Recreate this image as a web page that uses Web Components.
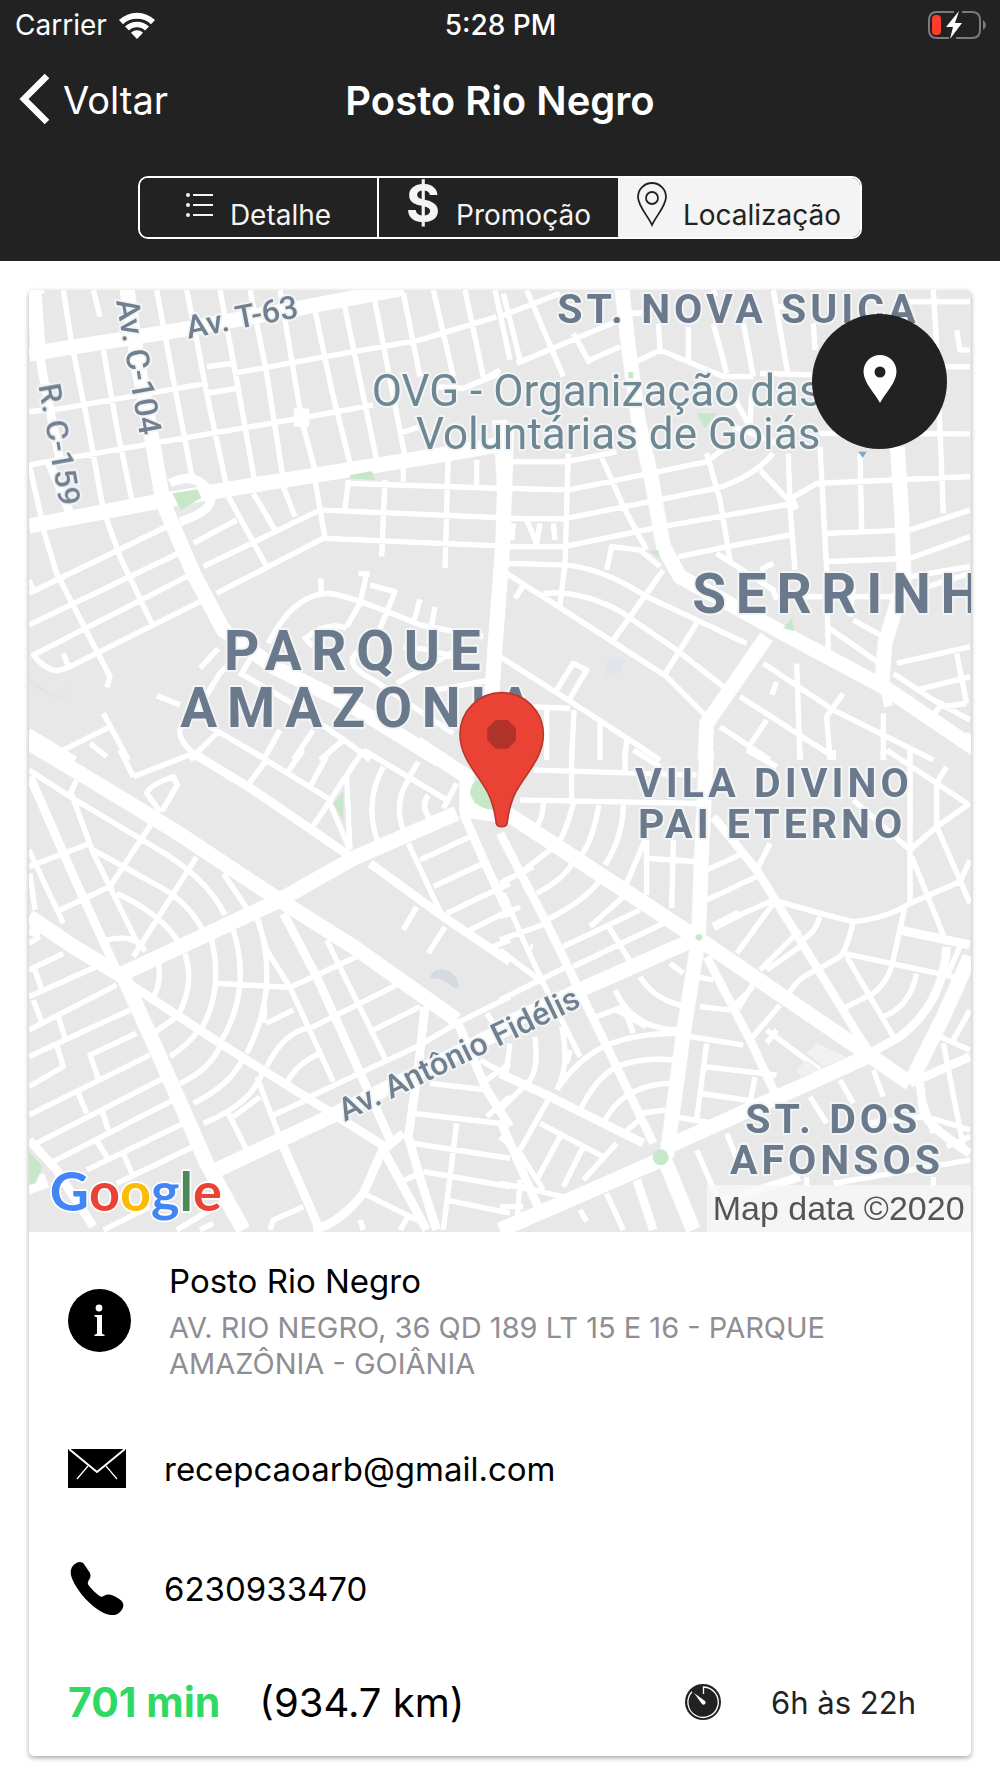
<!DOCTYPE html>
<html lang="pt-BR">
<head>
<meta charset="utf-8">
<meta name="viewport" content="width=device-width, initial-scale=1">
<title>Posto Rio Negro</title>
<style>
    body {
        margin: 0;
        background: #fff;
        font-family: Inter, "Liberation Sans", sans-serif;
        color: #000;
    }
</style>
</head>
<body>
<station-page>
    <status-bar slot="header" carrier="Carrier" time="5:28 PM"></status-bar>
    <nav-header slot="header" back="Voltar">Posto Rio Negro</nav-header>
    <tab-group slot="header">
        <tab-item icon="list">Detalhe</tab-item>
        <tab-item icon="dollar">Promoção</tab-item>
        <tab-item icon="pin" selected>Localização</tab-item>
    </tab-group>
    <station-card>
        <station-map slot="map"></station-map>
        <info-row icon="info" tall>
            Posto Rio Negro
            <span slot="detail">AV. RIO NEGRO, 36 QD 189 LT 15 E 16 - PARQUE AMAZÔNIA - GOIÂNIA</span>
        </info-row>
        <info-row icon="mail" href="mailto:recepcaoarb@gmail.com">recepcaoarb@gmail.com</info-row>
        <info-row icon="phone" href="tel:6230933470">6230933470</info-row>
        <trip-summary>
            <span slot="duration">701 min</span>
            <span slot="distance">(934.7 km)</span>
            <span slot="hours">6h às 22h</span>
        </trip-summary>
    </station-card>
</station-page>

<script>
const icons = {
    list: `<svg width="28" height="46" viewBox="0 0 28 46" fill="#f4f4f4" aria-hidden="true">
        <circle cx="2" cy="14" r="2"/><circle cx="2" cy="24" r="2"/><circle cx="2" cy="34" r="2"/>
        <path d="M7 13h20v2H7zM7 23h20v2H7zM7 33h20v2H7z"/></svg>`,
    dollar: `<span class="dollar" aria-hidden="true">$</span>`,
    pin: `<svg width="30" height="46" viewBox="0 0 30 46" fill="none" stroke="#222" stroke-width="1.8" aria-hidden="true">
        <path d="M15 44C11 35 1 25 1 16a14 14 0 0 1 28 0c0 9-10 19-14 28z"/><circle cx="15" cy="17" r="6"/></svg>`,
    info: `<svg width="63" height="63" viewBox="0 0 63 63" aria-hidden="true">
        <circle cx="31.5" cy="31.5" r="31.5"/>
        <g fill="#fff"><circle cx="31" cy="19" r="3.4"/><path d="M26.500 26H34v18c0 1 .8 1.400 2.500 1.600V47h-10v-1.400c1.700-.2 2.500-.6 2.500-1.600V29c0-1-.8-1.300-2.500-1.500z"/></g></svg>`,
    mail: `<svg width="58" height="39" viewBox="0 0 58 39" aria-hidden="true">
        <path d="M0 0h58v39H0z"/>
        <path d="M1 0l28 23L57 0" fill="none" stroke="#fff" stroke-width="2"/>
        <path d="M20 17L9 30M38 17l11 13" stroke="#fff" stroke-width="1.2"/></svg>`,
    phone: `<svg width="58" height="53" viewBox="0 0 58 53" aria-hidden="true">
        <path d="M8 1.200C11-.6 14.300-.2 16.300 2.500L21 9.500c2.400 3.500 1.600 6.200-.3 9-1.200 1.800-1.300 3.500.2 5.300 3.300 4 6.600 7.200 10.300 10 1.800 1.400 3.100 1 4.900-.1 2.600-1.600 5.400-1.800 8.800-.2 4.200 2 8.600 4.400 10 7.500 1.600 3.600-1 8-4.600 10.600-3.200 2.200-9.500 2-14.600-.6C23 44.500 10 31 4 16.500 1.700 10.500 2 4.800 8 1.200z"/></svg>`,
    clock: `<svg width="36" height="36" viewBox="0 0 36 36" aria-hidden="true">
        <circle cx="18" cy="18" r="18" fill="#222"/>
        <path d="M18.500 10V3a15.200 15.200 0 1 1-11.500 4.800" fill="none" stroke="#fff" stroke-width="1.300"/>
        <path d="M9 9l11 8a2 2 0 1 1-3 3z" fill="#fff"/></svg>`,
};

class StationPage extends HTMLElement {
    constructor() {
        super();
        this.attachShadow({mode: "open"}).innerHTML = `
            <style>
                :host { display: block; }
                header {
                    background: #222;
                    color: #fff;
                    padding-bottom: 22px;
                }
                main { padding: 29px 29px 22px; }
            </style>
            <header><slot name="header"></slot></header>
            <main><slot></slot></main>
        `;
    }
}

class StatusBar extends HTMLElement {
    constructor() {
        super();
        this.attachShadow({mode: "open"}).innerHTML = `
            <style>
                :host {
                    display: grid;
                    grid-template-columns: 1fr auto 1fr;
                    align-items: center;
                    height: 50px;
                    padding: 0 14px 0 15px;
                    font-size: 28px;
                }
                .carrier { display: flex; align-items: center; gap: 11px; }
                .time { font-weight: 500; }
                .battery { justify-self: end; }
            </style>
            <span class="carrier">${this.getAttribute("carrier")}
                <svg width="38" height="28" viewBox="0 0 38 28" fill="#fff" aria-hidden="true">
                    <path d="M1 9a26 26 0 0 1 36 0l-4 4.200a20.500 20.500 0 0 0-28 0z"/>
                    <path d="M7 15.500a17.300 17.300 0 0 1 24 0l-4 4a11.500 11.500 0 0 0-16 0z"/>
                    <path d="M19 28l-6-6.200a8.500 8.500 0 0 1 12 0z"/>
                </svg>
            </span>
            <span class="time">${this.getAttribute("time")}</span>
            <svg class="battery" width="58" height="30" viewBox="0 0 58 30" role="img" aria-label="Bateria">
                <path d="M26 2H9Q1 2 1 10v10q0 8 8 8h12M34 2h10q8 0 8 8v10q0 8-8 8H28" fill="none" stroke="#7b7b7b" stroke-width="2"/>
                <rect x="4" y="5" width="9" height="20" rx="4" fill="#ff3b30"/>
                <path d="M31 1L18 17h7l-3 12 12-16h-7z" fill="#fff"/>
                <path d="M55 10q3 2 3 5t-3 5z" fill="#7b7b7b"/>
            </svg>
        `;
    }
}

class NavHeader extends HTMLElement {
    constructor() {
        super();
        this.attachShadow({mode: "open"}).innerHTML = `
            <style>
                :host {
                    display: grid;
                    grid-template-columns: 1fr auto 1fr;
                    align-items: center;
                    height: 100px;
                    padding: 0 19px;
                }
                a {
                    display: flex;
                    align-items: center;
                    gap: 13px;
                    color: inherit;
                    font-size: 38px;
                    text-decoration: none;
                }
                h1 { margin: 0; font-size: 40px; font-weight: 600; }
            </style>
            <a href="#voltar">
                <svg width="31" height="54" viewBox="0 0 31 54" fill="none" stroke="#fff" stroke-width="6.500" aria-hidden="true">
                    <path d="M28 3L5 26l23 23"/>
                </svg>
                ${this.getAttribute("back")}
            </a>
            <h1><slot></slot></h1>
        `;
    }
}

class TabGroup extends HTMLElement {
    constructor() {
        super();
        this.attachShadow({mode: "open"}).innerHTML = `
            <style>
                :host {
                    display: grid;
                    grid-template-columns: 237fr 241fr 242fr;
                    box-sizing: border-box;
                    max-width: 724px;
                    margin: 26px auto 0;
                    border: 2px solid #fff;
                    border-radius: 10px;
                }
                ::slotted(:nth-child(2)) { border-left: 2px solid #fff; }
            </style>
            <slot></slot>
        `;
    }
}

class TabItem extends HTMLElement {
    constructor() {
        super();
        this.attachShadow({mode: "open"}).innerHTML = `
            <style>
                :host { display: block; }
                button {
                    display: flex;
                    align-items: flex-end;
                    justify-content: center;
                    gap: 16px;
                    width: 100%;
                    height: 59px;
                    margin: 0;
                    padding: 0 0 5px;
                    border: 0;
                    background: #222;
                    color: #f4f4f4;
                    font: 28px/34px Inter, "Liberation Sans", sans-serif;
                }
                :host(:first-child) button { border-radius: 8px 0 0 8px; }
                :host(:last-child) button { border-radius: 0 8px 8px 0; }
                :host([selected]) button { background: #f4f4f4; color: #222; }
                svg, .dollar { margin-bottom: 5px; }
                .dollar { font-size: 52px; font-weight: 700; line-height: 46px; }
            </style>
            <button type="button" aria-pressed="${this.hasAttribute("selected")}">
                ${icons[this.getAttribute("icon")]}
                <slot></slot>
            </button>
        `;
    }
}

class StationCard extends HTMLElement {
    constructor() {
        super();
        this.attachShadow({mode: "open"}).innerHTML = `
            <style>
                :host {
                    display: block;
                    border-radius: 5px;
                    background: #fff;
                    box-shadow: 0 2px 5px rgba(0, 0, 0, .35);
                }
                .map {
                    position: relative;
                    overflow: hidden;
                    border-radius: 5px 5px 0 0;
                }
                button {
                    position: absolute;
                    top: 24px;
                    right: 24px;
                    width: 135px;
                    height: 135px;
                    padding: 0;
                    border: 0;
                    border-radius: 50%;
                    background: #222;
                }
                button svg { display: block; margin: 0 auto 6px; }
            </style>
            <div class="map">
                <slot name="map"></slot>
                <button type="button" aria-label="Abrir rota">
                    <svg width="34" height="48" viewBox="0 0 34 48">
                        <path fill="#fff" fill-rule="evenodd" d="M17 0a16.500 16.500 0 0 1 16.500 16.500C33.500 28 22 38 17 48 12 38 .5 28 .5 16.500A16.500 16.500 0 0 1 17 0zm0 11.500a5.500 5.500 0 1 0 0 11 5.500 5.500 0 0 0 0-11z"/>
                    </svg>
                </button>
            </div>
            <slot></slot>
        `;
    }
}

/*
 * The map is drawn on a 2826 unit square, in four tiles.
 * Each tile has its own origin, set by the transform of its paths.
 */
class StationMap extends HTMLElement {
    constructor() {
        super();
        this.attachShadow({mode: "open"}).innerHTML = `
            <style>
                :host { display: block; }
                svg { display: block; width: 100%; }
                .roads path { fill: none; stroke: #fff; stroke-linejoin: round; }
                .roads { filter: drop-shadow(0 0 1px #d3d7df); }
                .w1 { stroke-width: 17; }
                .w2 { stroke-width: 27; }
                .w3 { stroke-width: 46; }
                text {
                    fill: #6a7a8c;
                    stroke: #f3f4f5;
                    stroke-width: 12;
                    stroke-linejoin: round;
                    paint-order: stroke;
                    font-family: Roboto, "Liberation Sans", sans-serif;
                }
                .district { font-size: 165px; font-weight: 700; letter-spacing: 29px; }
                .sector { font-size: 123px; font-weight: 700; letter-spacing: 12px; }
                .place { font-size: 132px; fill: #6d8793; }
                .street { font-size: 96px; fill: #718091; font-weight: 500; }
                .google { font: 700 162px Lato, sans-serif; stroke: #fff; stroke-width: 10; }
                .copy { font: 102px "Liberation Sans", sans-serif; fill: #555; stroke: none; }
            </style>
            <svg viewBox="27 30 2826 2826" role="img" aria-label="Mapa">
                <path fill="#e8e8e8" d="M0 0h2900v2900H0z"/>
                <g fill="#d5d9e0">
                    <path d="M1230 2095q5-35 50-25 30 10 38 48-10 15-30-5-20-20-58-18z"/>
                    <path fill="#e1e4ea" d="M1755 1150l40-20 20 10-15 40-40 10zM27 1190q70 60 100 60l25-35-22 40q-60-5-103-50z"/>
                </g>

                <g class="roads">
                    <path class="w1" d="M130 30L155 190 205 440 250 690 300 830 400 1040M220 30L240 110M250 210L290 440 340 680M410 30L460 300 520 610M500 30L530 180 560 340 620 620M600 30L650 300 705 610M690 30L740 280 790 600M780 30L840 390M845 420L885 570M885 90L935 330 990 550M970 60L1070 540M1060 40L1155 530M1150 40L1200 290M1240 30L1300 290M1335 30L1390 290M1425 30L1470 240M27 60L70 30
                        M27 395L130 385 560 310M560 260L640 250M640 280L1000 215 1200 180 1430 110M27 555L400 490 840 415 1060 375M560 340L650 325M27 550L70 740M1390 300L1440 270M1140 460L1200 440M1240 320L1330 325L1440 280
                        M985 610L1440 625M885 600L915 775 1440 798M985 600L975 690M1095 600L1085 830M1285 520L1275 865M1370 540L1370 620M1150 540L1150 605M900 690L1440 713
                        M27 940L440 740M27 1035L475 820M510 885L40 1125Q70 1165 110 1173L140 1165 550 960M520 790L650 720M550 860L900 690M590 940L910 775M620 640L740 860M700 640L765 750M790 620L825 710M70 750L110 880 270 1190 260 1222M130 1120L145 1160M27 900L45 940
                        M745 1090Q820 940 930 940 1000 950 1200 1035L1390 1070M1040 880L1020 970 980 1040M1015 880L1050 882M1050 915L1125 935 1080 1045M1200 958L1180 1030M1245 980L1225 1090M903 895L903 940M850 1080Q920 1020 980 1045M700 1080L600 1180 520 1310Q450 1340 500 1400L540 1440M595 1105L540 1165M660 1180L800 1260 1000 1400 1050 1440M700 1120L660 1190M860 1080L880 1100M1020 1110Q960 1150 1060 1200L1300 1360M1150 1100L1230 1110 1300 1130M1130 1210L1330 1100M1250 1230L1410 1200M600 1350L510 1440M780 1350L730 1440M880 1350L820 1440M970 1380L900 1440M570 1340L740 1440
                        M410 1247L480 1275M250 1300L325 1440M130 1410L270 1340M210 1390L260 1430"/>
                    <path class="w1" transform="translate(1440)" d="M0 110L180 40M10 40L60 240M80 30L190 290M50 250L360 120M220 160L270 250M270 240L360 200M475 130L480 210M400 250L480 210 670 290 760 290M565 140L565 240M640 130L680 280M640 30L645 50M730 130L760 290M820 30L865 290M780 280L940 285M940 130L945 210M1300 30L1310 200 1330 700M1220 65L1410 65M1370 150L1380 210 1410 210M1330 260L1410 260M960 460L1410 462M390 100L440 98M830 80L870 80
                        M25 545L200 545 350 515M25 625L205 630 620 545 680 500M25 715L190 717 650 625Q760 590 820 520M25 800L190 800 460 745 870 672M535 830L680 800 870 765M205 520L195 850 180 975M300 520L370 680 440 810M620 520L660 660 690 840M865 520L870 680 885 870M960 500L980 870 985 1120M780 570L865 660 950 610 1410 590M1080 520L1085 750M980 760L1230 750 1410 690M980 845L1230 835 1410 770M1230 890L1410 860M755 340L750 440M700 440L860 500M700 350L750 440
                        M20 850L190 855Q300 860 440 950L590 1020 740 1090M20 880L330 1080 500 1190 620 1310M130 940Q250 930 370 1000L530 1110 670 1220M490 870L340 1080M590 1030L490 1190M45 955L68 920M170 1230L220 1150 260 1170 210 1255M40 730L35 780M80 720L110 790 120 730M160 730L165 780M320 870L335 800 420 810 480 860M650 820L820 930 830 960M780 870L820 850
                        M0 1130L220 1270 420 1400 480 1440M80 1280L210 1285M140 1290V1440M222 1290L215 1440M300 1320V1440M380 1380L375 1440M0 750L20 800M0 840L20 890
                        M980 1040L1140 1150M1060 1020L1150 1070M1190 1150L1410 1100M1180 1180L1300 1260 1410 1320M1250 1230L1410 1190M1370 1120L1400 1270M1330 1265L1290 1320M1400 1270L1330 1280M1250 930L1410 880M900 950L1180 950M1060 920L1050 1010
                        M790 1150L1000 1290 1300 1440M890 1150L900 1440M720 1250L1000 1430M660 1340L810 1440M800 1320L750 1395M1030 1240L980 1310 990 1440M830 1205L815 1245M1150 1300V1440M1410 1360L1380 1400"/>
                    <path class="w1" transform="translate(0 1410)" d="M27 60L150 140 400 290Q560 380 615 495M150 120L220 310 360 595M170 90L145 145M220 300L400 400Q500 450 545 535M290 430Q420 490 475 575M395 220L270 410M530 320L340 620M610 370L690 490M27 350L210 280M110 485L280 405M27 300L130 520M260 570Q350 550 375 605
                        M415 640Q425 700 400 740M495 610Q525 700 475 795M575 570Q610 720 545 835M640 540Q695 720 605 870M715 510Q780 720 680 910M590 700L810 712M710 500L740 600 810 712 940 995M920 570L1095 925M810 712L1010 620M860 840L1130 705M870 1040L1200 885 1310 820M1060 840L1200 770M730 820L735 770M740 950Q790 850 860 835M800 1000Q830 940 900 910M820 780L740 820
                        M400 850L470 800M450 920Q510 880 535 840M480 1000Q570 960 605 880M520 1060Q640 1000 670 920M550 1120Q700 1060 730 960M620 1080L680 1200M710 980L775 1150M750 1100L870 1045M640 1100L720 1040
                        M27 660L130 610M27 740L230 650M27 840L290 705M27 920L330 780M350 850L210 915 235 985M27 1010L130 950 110 885M27 1095L390 915M50 1180L430 985M90 1240L460 1050M200 1260L490 1120M290 1300L520 1190M45 660L65 720M40 750L65 815M115 800L135 865M175 1030L200 1090M245 1080L265 1140M230 1170L265 1230M310 1210L340 1280M27 580L60 560M250 1440L390 1370M470 1440L570 1380M540 1440L580 1420
                        M340 80L520 10M300 0L340 80M690 0L940 155M740 30L680 110M800 70L850 0M870 110L920 20M875 235L1030 0M930 160L990 300M980 80L990 300M1090 50Q1030 160 1075 280M1165 90Q1120 160 1150 240M1225 135Q1200 170 1230 205M1030 0L1280 150M1195 35L1160 95M1310 100L1270 175M1165 280L1265 495M1200 330L1350 260M1240 410L1390 340M1280 490L1470 400M1350 540L1470 480M1420 590L1470 570M1190 470L1150 540M1275 530L1225 610M420 185L380 130Q390 105 460 80L472 105 425 185
                        M750 1440L760 1410 850 1370M1030 1330L1210 1420M1130 1300L1200 1270M1310 1120L1270 1440M1180 1090L1440 1120M1180 1180L1470 1225M1210 1265L1470 1310M1280 1350L1470 1390M1230 1000L1400 1020M1380 930L1470 980M1400 1100L1470 1040M1400 790L1420 820M1310 820L1470 740M1400 990L1470 940M1020 1410L1030 1440M1140 1440L1170 1390M30 370L45 480"/>
                    <path class="w1" transform="translate(1440 1410)" d="M100 60L590 75M60 150L590 160M215 0V160M375 0V65M130 160Q130 210 100 240M220 160Q200 240 170 290M297 160Q280 270 240 320M370 160Q370 260 315 345M435 270L380 400M440 270V435M520 270L515 475M440 325L590 335
                        M60 370L150 300M110 430Q190 390 220 335M130 515Q260 450 300 390M270 530L370 440M190 590L420 480M220 650L490 520M320 520L400 650M0 400L100 350M0 570L140 520M0 500L60 470M0 750L200 650M0 600L130 700M90 590L100 590M10 430L70 570 130 700 240 920
                        M620 360L730 310M620 450L780 375M640 530L820 450M770 360L810 280M820 450L960 490 1060 515Q1160 505 1230 460L1380 395 1410 330M1230 0V460M1230 300L1310 230 1410 160M740 0L830 50M1060 150L1230 300M1310 90V230L1410 460M1235 320L1340 580M1160 0L1400 160M1340 50L1310 100M900 0V30M1000 0V30M1150 0V30M400 0L480 50
                        M820 460L710 610M900 540L780 660M960 500Q940 560 900 570M1060 515Q1040 600 1020 620L950 660Q880 690 865 740M800 660L900 590M1030 610L1360 680M1215 470L1175 650Q1150 720 1100 740L1020 780M1040 620L1180 860M1250 670Q1230 770 1150 800M1380 590L1340 680
                        M590 680L640 690M600 770L690 780M420 680Q460 750 560 770M345 720Q400 840 540 840M510 640L550 670M290 800L370 770 400 850M350 780L440 830M310 890Q400 850 530 850M350 950Q430 920 520 930M390 1030Q450 1000 510 1000M420 1090L500 1080M170 1020Q230 930 310 890M240 1080Q290 980 350 950M310 1120Q340 1060 390 1030M370 1150L430 1100M185 830Q210 950 170 1020M105 860Q120 980 70 1010M0 960L20 960 30 880M210 900L200 940
                        M570 860L730 885M620 880L590 1110M610 950L830 975M600 1030L770 1055M520 1100L640 1120M700 770L760 710M750 870L840 765M800 840L960 960M830 840L800 880M760 700L715 775M765 980L750 1060
                        M150 1040L60 1200M120 1120L310 1220M180 1160L110 1290M250 1190L190 1310M350 1180L250 1290M60 1210L0 1160M60 1210L130 1320M0 1300L100 1320 190 1340M60 1290L50 1440M0 1370L70 1370M0 1080L70 1010
                        M320 1330L370 1440M240 1380L260 1415M590 1200L650 1340M680 1150L720 1250M1020 990L1060 1060M930 1040L980 1120M1120 960L1150 1040M1280 1100L1410 1140M1330 880L1390 1190M1320 860L1410 900M1410 780L1360 870M1270 1050L1300 1150M1340 1190L1410 1160M920 1280V1310M1300 1280V1310M1000 1300L1410 1230M1100 1120L1270 1100"/>
                    <path class="w2" d="M85 540L150 700M50 170L70 290 120 540M450 610Q530 570 570 640 590 690 480 725M1240 1440L1150 1370"/>
                    <path class="w2" transform="translate(1440)" d="M0 440L10 640 0 900M870 650L885 690M1150 1200L1165 1280"/>
                    <path class="w2" transform="translate(0 1410)" d="M30 80L170 400 285 650M790 490L890 680 1030 990 1115 1180M310 690L600 880 920 1080 1095 1190M520 10L700 120 985 315M1050 340L1270 500 1470 635M790 1190L900 1440M1090 1195L1030 1330Q960 1420 880 1440M1090 1200L1220 1440M1215 770L1195 950 1165 1160 1205 1300 1250 1440M1330 190L1400 350 1470 500M1310 810L1400 1020 1470 1130M27 1170L110 1260 220 1430M1150 1150L1090 1200M27 540L60 555"/>
                    <path class="w2" transform="translate(1440 1410)" d="M0 250L140 520 330 910 460 1180M640 200L770 360 900 570 1105 905M620 620L750 870 830 1040M0 970L150 1040 430 1180M0 1110L100 1340 130 1400M1200 540L1410 585M1340 590Q1330 760 1200 860L1100 915M410 1290L460 1440M1230 1000L1410 920M1260 1000L1270 1090Q1300 1140 1410 1210M650 1360L900 1280M640 530L720 490M0 1440L130 1380"/>
                    <path class="w3" d="M27 222L480 150 860 80 1150 25M40 20L55 220M320 20L350 230 400 500 430 670 520 880 610 1050 760 1160 1000 1280 1260 1440M27 738L410 665 640 625 1290 520 1460 490M1460 440L1448 800 1425 1100 1415 1250M20 1365L160 1450M845 385V440"/>
                    <path class="w3" transform="translate(1440)" d="M365 20L385 200 415 420 455 600 490 800 540 890 850 1060 1150 1220 1460 1430M800 1070L620 1330 615 1440M1192 500L1205 700 1212 900 1155 1090 1145 1220M0 420L15 650"/>
                    <path class="w3" transform="translate(0 1410)" d="M20 -25L180 70 460 240 770 445 1000 590 1310 810M310 670L770 455 1000 325 1310 190M1190 -20L1340 80V180L1470 200M27 500L160 590 310 680 410 900 560 1240 670 1440M590 1260L930 1100 1150 990 1470 830M0 1320L80 1290"/>
                    <path class="w3" transform="translate(1440 1410)" d="M20 190L600 570 1100 910 1230 1000M620 0L605 300 595 570 550 850 500 1220M480 1230L230 1340 0 1440M500 1190L880 1020 1100 920M0 830L240 720 600 560M1230 1000L1330 800 1410 620M490 1220L580 1440"/>
                </g>

                <g fill="#c6e7c8">
                    <path d="M457 640l75-12 12 25-62 38zM990 585l65-12 10 27-75-5zM2030 400h60l-35 45zM1890 815l25-5 5 25zM2290 1045l25-30 8 38zM940 1570l30-35v90zM1350 1540q5-55 55-35l40 85q-80 5-95-50zM27 2615l40 45-20 50-20 5zM1825 275h15v20h-15z"/>
                    <circle cx="1922" cy="2632" r="24"/>
                    <circle cx="2037" cy="1972" r="10"/>
                </g>
                <path fill="#f8f8f8" opacity=".8" d="M2060 2715h800v150h-800z"/>
                <path fill="#f1f1f1" d="M2360 2320l30-30 90 40-70 30zM2330 2370l30-30 40 30-60 20z"/>
                <path fill="#78a9c9" d="M2515 515l13 18 12-18z"/>

                <text class="sector" x="1612" y="128">ST. NOVA SUICA</text>
                <text class="place" x="1055" y="377">OVG - Organização das</text>
                <text class="place" x="1188" y="508">Voluntárias de Goiás</text>
                <text class="district" x="612" y="1170">PARQUE</text>
                <text class="district" x="481" y="1340">AMAZONIA</text>
                <text class="district" x="2017" y="1000">SERRINHA</text>
                <text class="sector" x="1845" y="1551">VILA DIVINO</text>
                <text class="sector" x="1854" y="1675">PAI ETERNO</text>
                <text class="sector" x="2176" y="2560">ST. DOS</text>
                <text class="sector" x="2130" y="2683">AFONSOS</text>
                <text class="street" transform="translate(505 176) rotate(-11)">Av. T-63</text>
                <text class="street" transform="translate(288 62) rotate(80)">Av. C-104</text>
                <text class="street" transform="translate(55 316) rotate(80)">R. C-159</text>
                <text class="street" transform="translate(974 2525) rotate(-26)">Av. Antônio Fidélis</text>
                <text class="google" x="89" y="2793"><tspan fill="#4285f4">G</tspan><tspan fill="#ea4335">o</tspan><tspan fill="#fbbc05">o</tspan><tspan fill="#4285f4">g</tspan><tspan fill="#4c8a59">l</tspan><tspan fill="#ea4335">e</tspan></text>
                <text class="copy" x="2078" y="2819">Map data ©2020</text>

                <path fill="#ea4335" stroke="#b9382c" stroke-width="5" d="M1445 1238a125 125 0 0 1 125 125c0 75-60 125-85 178-18 38-20 62-24 90-4 12-28 12-32 0-4-28-6-52-24-90-25-53-85-103-85-178a125 125 0 0 1 125-125z"/>
                <path fill="#b03228" d="M1427 1320h36l25 25v36l-25 25h-36l-25-25v-36z"/>
            </svg>
        `;
    }
}

class InfoRow extends HTMLElement {
    constructor() {
        super();
        const href = this.getAttribute("href");
        this.attachShadow({mode: "open"}).innerHTML = `
            <style>
                :host {
                    display: flex;
                    align-items: center;
                    gap: 38px;
                    min-height: 120px;
                    padding: 0 39px;
                    font-size: 33px;
                    line-height: 40px;
                }
                :host([tall]) { min-height: 176px; }
                svg { flex: none; }
                .text { padding-top: 2px; }
                a { color: inherit; text-decoration: none; }
                ::slotted([slot="detail"]) {
                    display: block;
                    margin-top: 9px;
                    color: #8e8e93;
                    font-size: 29px;
                    line-height: 36px;
                }
            </style>
            ${icons[this.getAttribute("icon")]}
            <div class="text">
                ${href ? `<a href="${href}"><slot></slot></a>` : `<slot></slot>`}
                <slot name="detail"></slot>
            </div>
        `;
    }
}

class TripSummary extends HTMLElement {
    constructor() {
        super();
        this.attachShadow({mode: "open"}).innerHTML = `
            <style>
                :host {
                    display: flex;
                    align-items: center;
                    min-height: 108px;
                    padding: 0 55px 0 39px;
                    font-size: 40px;
                }
                .duration { margin-right: 39px; color: #30d964; font-size: 41px; font-weight: 700; }
                .hours {
                    display: flex;
                    align-items: center;
                    gap: 50px;
                    margin-left: auto;
                    color: #222;
                    font-size: 31px;
                }
            </style>
            <span class="duration"><slot name="duration"></slot></span>
            <slot name="distance"></slot>
            <span class="hours">${icons.clock}<slot name="hours"></slot></span>
        `;
    }
}

customElements.define("station-page", StationPage);
customElements.define("status-bar", StatusBar);
customElements.define("nav-header", NavHeader);
customElements.define("tab-group", TabGroup);
customElements.define("tab-item", TabItem);
customElements.define("station-card", StationCard);
customElements.define("station-map", StationMap);
customElements.define("info-row", InfoRow);
customElements.define("trip-summary", TripSummary);
</script>
</body>
</html>
